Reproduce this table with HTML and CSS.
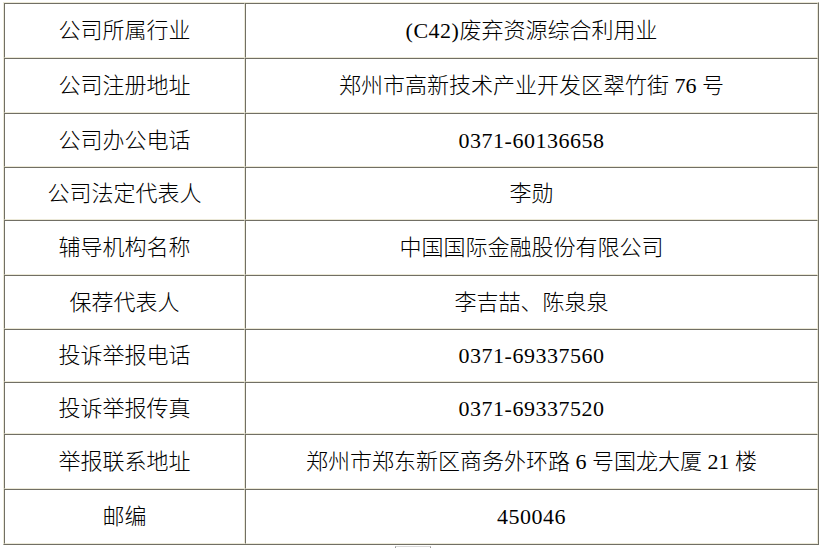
FILE: index.html
```html
<!DOCTYPE html>
<html lang="zh-CN">
<head>
<meta charset="utf-8">
<title>公司信息</title>
<link rel="stylesheet" href="styles.css">
</head>
<body>
<table class="info">
  <tbody>
    <tr><td class="label">公司所属行业</td><td class="value"><span class="num">(C42)</span>废弃资源综合利用业</td></tr>
    <tr><td class="label">公司注册地址</td><td class="value">郑州市高新技术产业开发区翠竹街 76 号</td></tr>
    <tr><td class="label">公司办公电话</td><td class="value"><span class="num">0371-60136658</span></td></tr>
    <tr><td class="label">公司法定代表人</td><td class="value">李勋</td></tr>
    <tr><td class="label">辅导机构名称</td><td class="value">中国国际金融股份有限公司</td></tr>
    <tr><td class="label">保荐代表人</td><td class="value">李吉喆、陈泉泉</td></tr>
    <tr><td class="label">投诉举报电话</td><td class="value"><span class="num">0371-69337560</span></td></tr>
    <tr><td class="label">投诉举报传真</td><td class="value"><span class="num">0371-69337520</span></td></tr>
    <tr><td class="label">举报联系地址</td><td class="value">郑州市郑东新区商务外环路 6 号国龙大厦 21 楼</td></tr>
    <tr><td class="label">邮编</td><td class="value"><span class="num">450046</span></td></tr>
  </tbody>
</table>
<div class="below"></div>
</body>
</html>
```

FILE: styles.css
```css
html, body {
  margin: 0;
  padding: 0;
  background: #ffffff;
}

.info {
  border-collapse: separate;
  border-spacing: 0;
  border: 1px solid;
  border-color: #ECE9D8 #716F64 #716F64 #ECE9D8;
  margin: 2px 0 0 3px;
  width: 816px;
  table-layout: fixed;
  font-family: "Liberation Serif", "Noto Sans CJK SC", serif;
  font-size: 22px;
  font-weight: 300;
  color: #000;
}

.info td {
  box-sizing: border-box;
  border: 1px solid;
  border-color: #716F64 #ECE9D8 #ECE9D8 #716F64;
  text-align: center;
  vertical-align: middle;
  padding: 2px 0 0 0;
  height: 54px;
  line-height: 1.2;
  white-space: nowrap;
}

.info td.label {
  width: 241px;
}

.num {
  letter-spacing: 0.5px;
}

.info tr:nth-child(1) td { height: 55px; }
.info tr:nth-child(2) td { height: 55px; }
.info tr:nth-child(3) td { height: 54px; }
.info tr:nth-child(4) td { height: 53px; }
.info tr:nth-child(5) td { height: 55px; }
.info tr:nth-child(6) td { height: 54px; }
.info tr:nth-child(7) td { height: 53px; }
.info tr:nth-child(8) td { height: 52px; }
.info tr:nth-child(9) td { height: 55px; }
.info tr:nth-child(10) td { height: 55px; }

.below {
  margin: 1px 0 0 395px;
  width: 34px;
  height: 10px;
  border: 1px solid #d8d8d8;
  border-left-color: #999;
  border-right-color: #999;
}
```
